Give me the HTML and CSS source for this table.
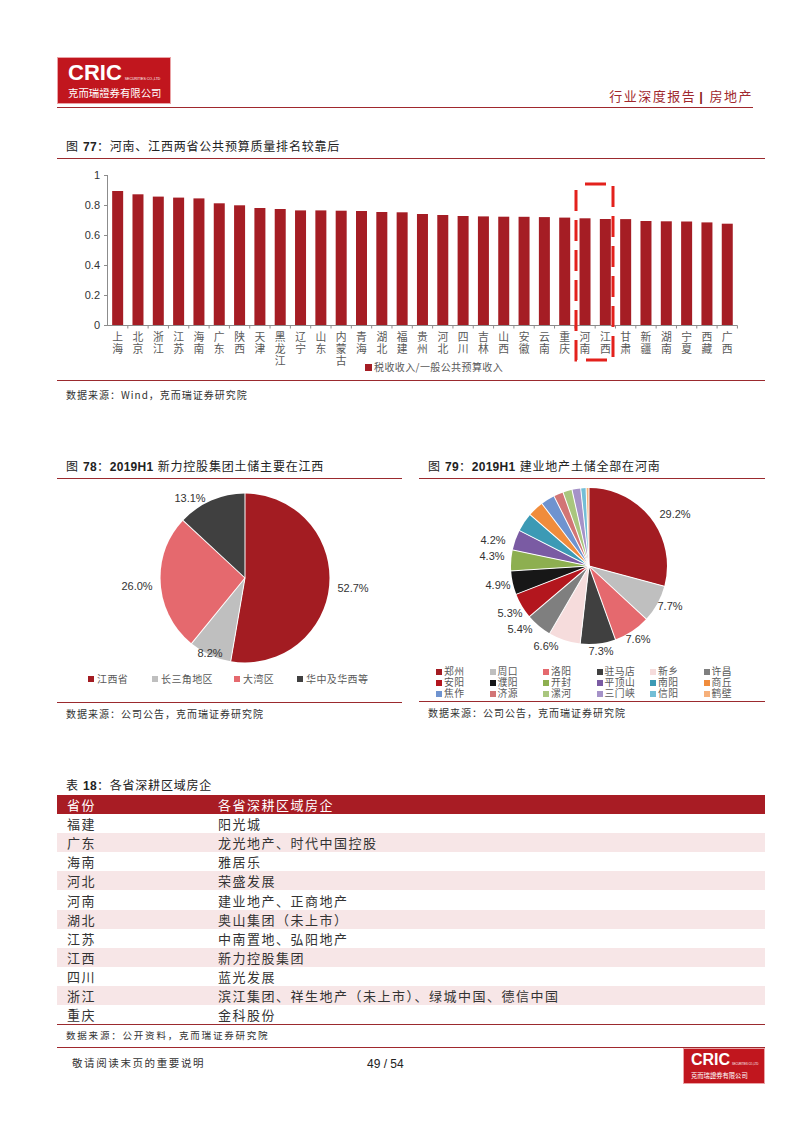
FILE: index.html
```html
<!DOCTYPE html>
<html lang="zh-CN">
<head>
<meta charset="utf-8">
<title>行业深度报告 | 房地产</title>
<link rel="stylesheet" href="styles.css">
</head>
<body>
<div class="page">
  <header class="header">
    <div class="logo">
      <div class="logo-row"><span class="logo-cric">CRIC</span><span class="logo-ltd">SECURITIES CO.,LTD</span></div>
      <div class="logo-cn">克而瑞證券有限公司</div>
    </div>
    <div class="header-tag">行业深度报告<b class="bar">|</b>房地产</div>
  </header>

  <section class="fig fig-wide">
    <div class="fig-title">图 <b>77</b>：河南、江西两省公共预算质量排名较靠后</div>
    <div class="chart">
      <svg class="svg" viewBox="57 160 708 221" width="708" height="221">
        <g class="yl">
          <text x="100" y="180">1</text>
          <text x="100" y="210">0.8</text>
          <text x="100" y="240">0.6</text>
          <text x="100" y="270">0.4</text>
          <text x="100" y="300">0.2</text>
          <text x="100" y="330">0</text>
        </g>
        <path class="axis" d="M107.5 176V326.5M104 176.5H107.5M104 206.5H107.5M104 236.5H107.5M104 266.5H107.5M104 296.5H107.5M104 326.5H737.5M127.82 326.5v3M148.14 326.5v3M168.46 326.5v3M188.78 326.5v3M209.1 326.5v3M229.42 326.5v3M249.74 326.5v3M270.06 326.5v3M290.38 326.5v3M310.7 326.5v3M331.02 326.5v3M351.34 326.5v3M371.66 326.5v3M391.98 326.5v3M412.3 326.5v3M432.62 326.5v3M452.94 326.5v3M473.26 326.5v3M493.58 326.5v3M513.9 326.5v3M534.22 326.5v3M554.54 326.5v3M574.86 326.5v3M595.18 326.5v3M615.5 326.5v3M635.82 326.5v3M656.14 326.5v3M676.46 326.5v3M696.78 326.5v3M717.1 326.5v3M737.42 326.5v3"/>
        <g class="bars">
          <rect x="112.16" y="192" width="11" height="134"/>
          <rect x="132.48" y="195.3" width="11" height="130.7"/>
          <rect x="152.8" y="197.6" width="11" height="128.4"/>
          <rect x="173.12" y="198.6" width="11" height="127.4"/>
          <rect x="193.44" y="199.4" width="11" height="126.6"/>
          <rect x="213.76" y="204.3" width="11" height="121.7"/>
          <rect x="234.08" y="206.3" width="11" height="119.7"/>
          <rect x="254.4" y="209" width="11" height="117"/>
          <rect x="274.72" y="210" width="11" height="116"/>
          <rect x="295.04" y="211.4" width="11" height="114.6"/>
          <rect x="315.36" y="211.4" width="11" height="114.6"/>
          <rect x="335.68" y="211.7" width="11" height="114.3"/>
          <rect x="356" y="212" width="11" height="114"/>
          <rect x="376.32" y="213" width="11" height="113"/>
          <rect x="396.64" y="213.3" width="11" height="112.7"/>
          <rect x="416.96" y="215" width="11" height="111"/>
          <rect x="437.28" y="216" width="11" height="110"/>
          <rect x="457.6" y="217" width="11" height="109"/>
          <rect x="477.92" y="217.4" width="11" height="108.6"/>
          <rect x="498.24" y="217.7" width="11" height="108.3"/>
          <rect x="518.56" y="217.8" width="11" height="108.2"/>
          <rect x="538.88" y="218.1" width="11" height="107.9"/>
          <rect x="559.2" y="218.6" width="11" height="107.4"/>
          <rect x="579.52" y="219.3" width="11" height="106.7"/>
          <rect x="599.84" y="220" width="11" height="106"/>
          <rect x="620.16" y="220.1" width="11" height="105.9"/>
          <rect x="640.48" y="222" width="11" height="104"/>
          <rect x="660.8" y="222.3" width="11" height="103.7"/>
          <rect x="681.12" y="222.5" width="11" height="103.5"/>
          <rect x="701.44" y="223.4" width="11" height="102.6"/>
          <rect x="721.76" y="224.7" width="11" height="101.3"/>
        </g>
        <g class="xl">
          <text y="342"><tspan x="117.66">上</tspan><tspan x="117.66" dy="12.2">海</tspan></text>
          <text y="342"><tspan x="137.98">北</tspan><tspan x="137.98" dy="12.2">京</tspan></text>
          <text y="342"><tspan x="158.3">浙</tspan><tspan x="158.3" dy="12.2">江</tspan></text>
          <text y="342"><tspan x="178.62">江</tspan><tspan x="178.62" dy="12.2">苏</tspan></text>
          <text y="342"><tspan x="198.94">海</tspan><tspan x="198.94" dy="12.2">南</tspan></text>
          <text y="342"><tspan x="219.26">广</tspan><tspan x="219.26" dy="12.2">东</tspan></text>
          <text y="342"><tspan x="239.58">陕</tspan><tspan x="239.58" dy="12.2">西</tspan></text>
          <text y="342"><tspan x="259.9">天</tspan><tspan x="259.9" dy="12.2">津</tspan></text>
          <text y="342"><tspan x="280.22">黑</tspan><tspan x="280.22" dy="12.2">龙</tspan><tspan x="280.22" dy="12.2">江</tspan></text>
          <text y="342"><tspan x="300.54">辽</tspan><tspan x="300.54" dy="12.2">宁</tspan></text>
          <text y="342"><tspan x="320.86">山</tspan><tspan x="320.86" dy="12.2">东</tspan></text>
          <text y="342"><tspan x="341.18">内</tspan><tspan x="341.18" dy="12.2">蒙</tspan><tspan x="341.18" dy="12.2">古</tspan></text>
          <text y="342"><tspan x="361.5">青</tspan><tspan x="361.5" dy="12.2">海</tspan></text>
          <text y="342"><tspan x="381.82">湖</tspan><tspan x="381.82" dy="12.2">北</tspan></text>
          <text y="342"><tspan x="402.14">福</tspan><tspan x="402.14" dy="12.2">建</tspan></text>
          <text y="342"><tspan x="422.46">贵</tspan><tspan x="422.46" dy="12.2">州</tspan></text>
          <text y="342"><tspan x="442.78">河</tspan><tspan x="442.78" dy="12.2">北</tspan></text>
          <text y="342"><tspan x="463.1">四</tspan><tspan x="463.1" dy="12.2">川</tspan></text>
          <text y="342"><tspan x="483.42">吉</tspan><tspan x="483.42" dy="12.2">林</tspan></text>
          <text y="342"><tspan x="503.74">山</tspan><tspan x="503.74" dy="12.2">西</tspan></text>
          <text y="342"><tspan x="524.06">安</tspan><tspan x="524.06" dy="12.2">徽</tspan></text>
          <text y="342"><tspan x="544.38">云</tspan><tspan x="544.38" dy="12.2">南</tspan></text>
          <text y="342"><tspan x="564.7">重</tspan><tspan x="564.7" dy="12.2">庆</tspan></text>
          <text y="342"><tspan x="585.02">河</tspan><tspan x="585.02" dy="12.2">南</tspan></text>
          <text y="342"><tspan x="605.34">江</tspan><tspan x="605.34" dy="12.2">西</tspan></text>
          <text y="342"><tspan x="625.66">甘</tspan><tspan x="625.66" dy="12.2">肃</tspan></text>
          <text y="342"><tspan x="645.98">新</tspan><tspan x="645.98" dy="12.2">疆</tspan></text>
          <text y="342"><tspan x="666.3">湖</tspan><tspan x="666.3" dy="12.2">南</tspan></text>
          <text y="342"><tspan x="686.62">宁</tspan><tspan x="686.62" dy="12.2">夏</tspan></text>
          <text y="342"><tspan x="706.94">西</tspan><tspan x="706.94" dy="12.2">藏</tspan></text>
          <text y="342"><tspan x="727.26">广</tspan><tspan x="727.26" dy="12.2">西</tspan></text>
        </g>
        <rect class="hl" x="576" y="185" width="37" height="176" stroke-dasharray="21 9" stroke-dashoffset="21"/>
        <rect class="bar-key" x="365" y="365" width="7" height="7"/>
        <text class="lg" x="374" y="372">税收收入/一般公共预算收入</text>
      </svg>
    </div>
    <div class="source">数据来源：Wind，克而瑞证券研究院</div>
  </section>

  <div class="fig-row">
    <section class="fig">
      <div class="fig-title">图 <b>78</b>：<b>2019H1</b> 新力控股集团土储主要在江西</div>
      <div class="chart">
        <svg class="svg" viewBox="57 483 345 223" width="345" height="223">
          <g transform="rotate(-90 245 582)" fill="none" stroke-width="84.5">
            <circle cx="245" cy="582" r="42.25" pathLength="100" stroke="#a31c22" stroke-dasharray="52.7 100"/>
            <circle cx="245" cy="582" r="42.25" pathLength="100" stroke="#bfbfbf" stroke-dasharray="8.2 100" stroke-dashoffset="-52.7"/>
            <circle cx="245" cy="582" r="42.25" pathLength="100" stroke="#e5696e" stroke-dasharray="26 100" stroke-dashoffset="-60.9"/>
            <circle cx="245" cy="582" r="42.25" pathLength="100" stroke="#404040" stroke-dasharray="13.1 100" stroke-dashoffset="-86.9"/>
          </g>
          <g class="sep">
            <line x1="245" y1="582" x2="245" y2="497"/>
            <line x1="245" y1="582" x2="245" y2="497" transform="rotate(189.72 245 582)"/>
            <line x1="245" y1="582" x2="245" y2="497" transform="rotate(219.24 245 582)"/>
            <line x1="245" y1="582" x2="245" y2="497" transform="rotate(312.84 245 582)"/>
          </g>
          <g class="pl">
            <text x="190" y="506">13.1%</text>
            <text x="353" y="596">52.7%</text>
            <text x="137" y="594">26.0%</text>
            <text x="210" y="661">8.2%</text>
          </g>
          <g class="lg">
            <rect x="88" y="680" width="6" height="6" fill="#a31c22"/><text x="97" y="687">江西省</text>
            <rect x="152" y="680" width="6" height="6" fill="#bfbfbf"/><text x="161" y="687">长三角地区</text>
            <rect x="234" y="680" width="6" height="6" fill="#e5696e"/><text x="243" y="687">大湾区</text>
            <rect x="297" y="680" width="6" height="6" fill="#404040"/><text x="306" y="687">华中及华西等</text>
          </g>
        </svg>
      </div>
      <div class="source">数据来源：公司公告，克而瑞证券研究院</div>
    </section>

    <section class="fig">
      <div class="fig-title">图 <b>79</b>：<b>2019H1</b> 建业地产土储全部在河南</div>
      <div class="chart">
        <svg class="svg" viewBox="419 483 346 187" width="346" height="187">
          <g transform="rotate(-90 589 570)" fill="none" stroke-width="78">
            <circle cx="589" cy="570" r="39" pathLength="100" stroke="#a31c22" stroke-dasharray="29.2 100"/>
            <circle cx="589" cy="570" r="39" pathLength="100" stroke="#bfbfbf" stroke-dasharray="7.7 100" stroke-dashoffset="-29.2"/>
            <circle cx="589" cy="570" r="39" pathLength="100" stroke="#e5696e" stroke-dasharray="7.6 100" stroke-dashoffset="-36.9"/>
            <circle cx="589" cy="570" r="39" pathLength="100" stroke="#404040" stroke-dasharray="7.3 100" stroke-dashoffset="-44.5"/>
            <circle cx="589" cy="570" r="39" pathLength="100" stroke="#f6dcdc" stroke-dasharray="6.6 100" stroke-dashoffset="-51.8"/>
            <circle cx="589" cy="570" r="39" pathLength="100" stroke="#7f7f7f" stroke-dasharray="5.4 100" stroke-dashoffset="-58.4"/>
            <circle cx="589" cy="570" r="39" pathLength="100" stroke="#b3161e" stroke-dasharray="5.3 100" stroke-dashoffset="-63.8"/>
            <circle cx="589" cy="570" r="39" pathLength="100" stroke="#171717" stroke-dasharray="4.9 100" stroke-dashoffset="-69.1"/>
            <circle cx="589" cy="570" r="39" pathLength="100" stroke="#8daf50" stroke-dasharray="4.3 100" stroke-dashoffset="-74"/>
            <circle cx="589" cy="570" r="39" pathLength="100" stroke="#7a5ba3" stroke-dasharray="4.2 100" stroke-dashoffset="-78.3"/>
            <circle cx="589" cy="570" r="39" pathLength="100" stroke="#3c9ab5" stroke-dasharray="3.9 100" stroke-dashoffset="-82.5"/>
            <circle cx="589" cy="570" r="39" pathLength="100" stroke="#f08c3c" stroke-dasharray="3.3 100" stroke-dashoffset="-86.4"/>
            <circle cx="589" cy="570" r="39" pathLength="100" stroke="#6f93cf" stroke-dasharray="2.9 100" stroke-dashoffset="-89.7"/>
            <circle cx="589" cy="570" r="39" pathLength="100" stroke="#d27575" stroke-dasharray="2 100" stroke-dashoffset="-92.6"/>
            <circle cx="589" cy="570" r="39" pathLength="100" stroke="#a9c67e" stroke-dasharray="1.9 100" stroke-dashoffset="-94.6"/>
            <circle cx="589" cy="570" r="39" pathLength="100" stroke="#a592c8" stroke-dasharray="1.8 100" stroke-dashoffset="-96.5"/>
            <circle cx="589" cy="570" r="39" pathLength="100" stroke="#73bed6" stroke-dasharray="1.1 100" stroke-dashoffset="-98.3"/>
            <circle cx="589" cy="570" r="39" pathLength="100" stroke="#f6b07a" stroke-dasharray="0.6 100" stroke-dashoffset="-99.4"/>
          </g>
          <g class="sep">
            <line x1="589" y1="570" x2="589" y2="491"/>
            <line x1="589" y1="570" x2="589" y2="491" transform="rotate(105.12 589 570)"/>
            <line x1="589" y1="570" x2="589" y2="491" transform="rotate(132.84 589 570)"/>
            <line x1="589" y1="570" x2="589" y2="491" transform="rotate(160.2 589 570)"/>
            <line x1="589" y1="570" x2="589" y2="491" transform="rotate(186.48 589 570)"/>
            <line x1="589" y1="570" x2="589" y2="491" transform="rotate(210.24 589 570)"/>
            <line x1="589" y1="570" x2="589" y2="491" transform="rotate(229.68 589 570)"/>
            <line x1="589" y1="570" x2="589" y2="491" transform="rotate(248.76 589 570)"/>
            <line x1="589" y1="570" x2="589" y2="491" transform="rotate(266.4 589 570)"/>
            <line x1="589" y1="570" x2="589" y2="491" transform="rotate(281.88 589 570)"/>
            <line x1="589" y1="570" x2="589" y2="491" transform="rotate(297 589 570)"/>
            <line x1="589" y1="570" x2="589" y2="491" transform="rotate(311.04 589 570)"/>
            <line x1="589" y1="570" x2="589" y2="491" transform="rotate(322.92 589 570)"/>
            <line x1="589" y1="570" x2="589" y2="491" transform="rotate(333.36 589 570)"/>
            <line x1="589" y1="570" x2="589" y2="491" transform="rotate(340.56 589 570)"/>
            <line x1="589" y1="570" x2="589" y2="491" transform="rotate(347.4 589 570)"/>
            <line x1="589" y1="570" x2="589" y2="491" transform="rotate(353.88 589 570)"/>
            <line x1="589" y1="570" x2="589" y2="491" transform="rotate(357.84 589 570)"/>
          </g>
          <g class="pl">
            <text x="675" y="522">29.2%</text>
            <text x="670" y="614">7.7%</text>
            <text x="638" y="647">7.6%</text>
            <text x="601" y="659">7.3%</text>
            <text x="546" y="654">6.6%</text>
            <text x="520" y="637">5.4%</text>
            <text x="510" y="621">5.3%</text>
            <text x="498" y="593">4.9%</text>
            <text x="492" y="564">4.3%</text>
            <text x="493" y="548">4.2%</text>
          </g>
        </svg>
        <div class="legend6">
          <span class="li"><i class="k1"></i>郑州</span>
          <span class="li"><i class="k2"></i>周口</span>
          <span class="li"><i class="k3"></i>洛阳</span>
          <span class="li"><i class="k4"></i>驻马店</span>
          <span class="li"><i class="k5"></i>新乡</span>
          <span class="li"><i class="k6"></i>许昌</span>
          <span class="li"><i class="k7"></i>安阳</span>
          <span class="li"><i class="k8"></i>濮阳</span>
          <span class="li"><i class="k9"></i>开封</span>
          <span class="li"><i class="k10"></i>平顶山</span>
          <span class="li"><i class="k11"></i>南阳</span>
          <span class="li"><i class="k12"></i>商丘</span>
          <span class="li"><i class="k13"></i>焦作</span>
          <span class="li"><i class="k14"></i>济源</span>
          <span class="li"><i class="k15"></i>漯河</span>
          <span class="li"><i class="k16"></i>三门峡</span>
          <span class="li"><i class="k17"></i>信阳</span>
          <span class="li"><i class="k18"></i>鹤壁</span>
        </div>
      </div>
      <div class="source">数据来源：公司公告，克而瑞证券研究院</div>
    </section>
  </div>

  <section class="tbl-sec">
    <div class="tbl-title">表 <b>18</b>：各省深耕区域房企</div>
    <table class="tbl">
      <colgroup><col class="col1"><col class="col2"></colgroup>
      <thead>
        <tr><th>省份</th><th>各省深耕区域房企</th></tr>
      </thead>
      <tbody>
        <tr><td>福建</td><td>阳光城</td></tr>
        <tr><td>广东</td><td>龙光地产、时代中国控股</td></tr>
        <tr><td>海南</td><td>雅居乐</td></tr>
        <tr><td>河北</td><td>荣盛发展</td></tr>
        <tr><td>河南</td><td>建业地产、正商地产</td></tr>
        <tr><td>湖北</td><td>奥山集团（未上市）</td></tr>
        <tr><td>江苏</td><td>中南置地、弘阳地产</td></tr>
        <tr><td>江西</td><td>新力控股集团</td></tr>
        <tr><td>四川</td><td>蓝光发展</td></tr>
        <tr><td>浙江</td><td>滨江集团、祥生地产（未上市）、绿城中国、德信中国</td></tr>
        <tr><td>重庆</td><td>金科股份</td></tr>
      </tbody>
    </table>
    <div class="source source-sm">数据来源：公开资料，克而瑞证券研究院</div>
  </section>

  <footer class="footer">
    <div class="foot-note">敬请阅读末页的重要说明</div>
    <div class="page-num">49 / 54</div>
    <div class="logo logo-small">
      <div class="logo-row"><span class="logo-cric">CRIC</span><span class="logo-ltd">SECURITIES CO.,LTD</span></div>
      <div class="logo-cn">克而瑞證券有限公司</div>
    </div>
  </footer>
</div>
</body>
</html>
```

FILE: styles.css
```css
* { box-sizing: border-box; }

body {
  margin: 0;
  background: #fff;
  color: #333;
  font-family: "Liberation Sans", "Noto Sans CJK SC", sans-serif;
}

.page {
  width: 800px;
  height: 1131px;
  overflow: hidden;
  background: #fff;
}

/* ---------- header ---------- */
.header {
  margin: 57px 0 0 57px;
  width: 696px;
  display: flex;
  justify-content: space-between;
  align-items: flex-end;
  border-bottom: 1px solid #a0282d;
  padding-bottom: 3px;
}

.logo {
  width: 114px;
  height: 47px;
  background: #c1161e;
  border: 1px solid #eaa3a6;
  padding: 6px 0 0 10px;
  color: #fff;
  overflow: hidden;
}

.logo-row {
  display: flex;
  align-items: baseline;
  height: 18px;
  white-space: nowrap;
}

.logo-cric {
  font: bold 22px/18px "Liberation Sans", sans-serif;
}

.logo-ltd {
  font: 3.5px/4px "Liberation Sans", sans-serif;
  margin-left: 3px;
}

.logo-cn {
  font: 10.4px/12px "Noto Sans CJK SC", sans-serif;
  margin-top: 5px;
  white-space: nowrap;
}

.header-tag {
  font: 13px/14px "Noto Sans CJK SC", sans-serif;
  letter-spacing: 1.5px;
  color: #a0282d;
  white-space: nowrap;
}

.header-tag .bar {
  font-family: "Liberation Sans", sans-serif;
  font-weight: bold;
  margin: 0 5px 0 3px;
  color: #8b1f24;
}

/* ---------- figures ---------- */
.fig-wide {
  margin: 31px 0 0 57px;
  width: 708px;
}

.fig-title {
  font: 12px/16px "Liberation Sans", "Noto Sans CJK SC", sans-serif;
  letter-spacing: 0.8px;
  color: #222;
  padding: 0 0 3px 9px;
  border-bottom: 1.5px solid #9b2a2e;
  white-space: nowrap;
}

.fig-title b {
  font-weight: bold;
  letter-spacing: 0.3px;
}

.chart {
  border-bottom: 1.5px solid #9b2a2e;
}

.svg {
  display: block;
}

.source {
  font: 10px/14px "Noto Sans CJK SC", "Liberation Sans", sans-serif;
  letter-spacing: 1px;
  color: #333;
  padding: 7px 0 0 9px;
  white-space: nowrap;
}

.fig-row {
  margin: 57px 0 0 57px;
  width: 708px;
  display: grid;
  grid-template-columns: 345px 346px;
  column-gap: 17px;
}

.fig-row .source {
  padding-top: 4px;
}

/* chart text */
.yl text {
  font: 11px "Liberation Sans", sans-serif;
  fill: #333;
  text-anchor: end;
}

.axis {
  stroke: #8c8c8c;
  stroke-width: 1;
  fill: none;
}

.bars rect,
.bar-key {
  fill: #a51d24;
}

.xl text {
  font: 10.8px "Liberation Sans", "Noto Sans CJK SC", sans-serif;
  fill: #595959;
  text-anchor: middle;
}

.hl {
  fill: none;
  stroke: #e3211c;
  stroke-width: 3;
}

.lg,
.lg text {
  font: 10px "Noto Sans CJK SC", sans-serif;
  letter-spacing: 0.4px;
  fill: #595959;
}

.sep line {
  stroke: #fff;
  stroke-width: 1;
}

.pl text {
  font: 11px "Liberation Sans", sans-serif;
  fill: #333;
  text-anchor: middle;
}

/* legend of fig 79 */
.legend6 {
  display: grid;
  grid-template-columns: repeat(6, 53.5px);
  padding: 0 0 2px 17px;
  font: 9.8px/11px "Liberation Sans", "Noto Sans CJK SC", sans-serif;
  letter-spacing: 0.5px;
  color: #595959;
}

.li {
  display: flex;
  align-items: center;
  height: 11px;
  white-space: nowrap;
}

.li i {
  width: 6px;
  height: 6px;
  margin-right: 2px;
  flex: none;
}

.k1 { background: #a31c22; }
.k2 { background: #bfbfbf; }
.k3 { background: #e5696e; }
.k4 { background: #404040; }
.k5 { background: #f6dcdc; }
.k6 { background: #7f7f7f; }
.k7 { background: #b3161e; }
.k8 { background: #171717; }
.k9 { background: #8daf50; }
.k10 { background: #7a5ba3; }
.k11 { background: #3c9ab5; }
.k12 { background: #f08c3c; }
.k13 { background: #6f93cf; }
.k14 { background: #d27575; }
.k15 { background: #a9c67e; }
.k16 { background: #a592c8; }
.k17 { background: #73bed6; }
.k18 { background: #f6b07a; }

/* ---------- table ---------- */
.tbl-sec {
  margin: 57px 0 0 57px;
  width: 708px;
}

.tbl-title {
  font: 12px/16px "Liberation Sans", "Noto Sans CJK SC", sans-serif;
  letter-spacing: 0.8px;
  color: #222;
  padding: 0 0 1px 9px;
}

.tbl-title b {
  font-weight: bold;
  letter-spacing: 0.3px;
}

.tbl {
  width: 708px;
  table-layout: fixed;
  border-collapse: collapse;
  border-bottom: 1.5px solid #9b2a2e;
  font: 13px/19px "Noto Sans CJK SC", sans-serif;
  letter-spacing: 1.5px;
  color: #333;
}

.col1 { width: 151px; }
.col2 { width: 557px; }

.tbl th,
.tbl td {
  height: 19.1px;
  padding: 0 0 0 10px;
  text-align: left;
  font-weight: normal;
  vertical-align: middle;
  white-space: nowrap;
}

.tbl th {
  background: #a81c24;
  color: #fff;
}

.tbl tbody tr:nth-child(even) {
  background: #f7e6e7;
}

.source-sm {
  font-size: 9.5px;
  letter-spacing: 1.8px;
  padding-top: 3px;
}

/* ---------- footer ---------- */
.footer {
  margin: 5px 0 0 57px;
  width: 708px;
  display: flex;
  align-items: flex-start;
  border-top: 1px solid #a0282d;
}

.foot-note {
  width: 310px;
  padding: 9px 0 0 15px;
  font: 10.5px/12px "Noto Sans CJK SC", sans-serif;
  letter-spacing: 1.6px;
  color: #333;
}

.page-num {
  padding-top: 10px;
  font: 12px/12px "Liberation Sans", sans-serif;
  color: #222;
}

.logo-small {
  margin-left: auto;
  width: 82px;
  height: 36px;
  padding: 4px 0 0 7px;
}

.logo-small .logo-row {
  height: 14px;
}

.logo-small .logo-cric {
  font: bold 16px/14px "Liberation Sans", sans-serif;
}

.logo-small .logo-ltd {
  font-size: 2.6px;
  margin-left: 2px;
}

.logo-small .logo-cn {
  font-size: 6.3px;
  line-height: 8px;
  margin-top: 5px;
}
```
